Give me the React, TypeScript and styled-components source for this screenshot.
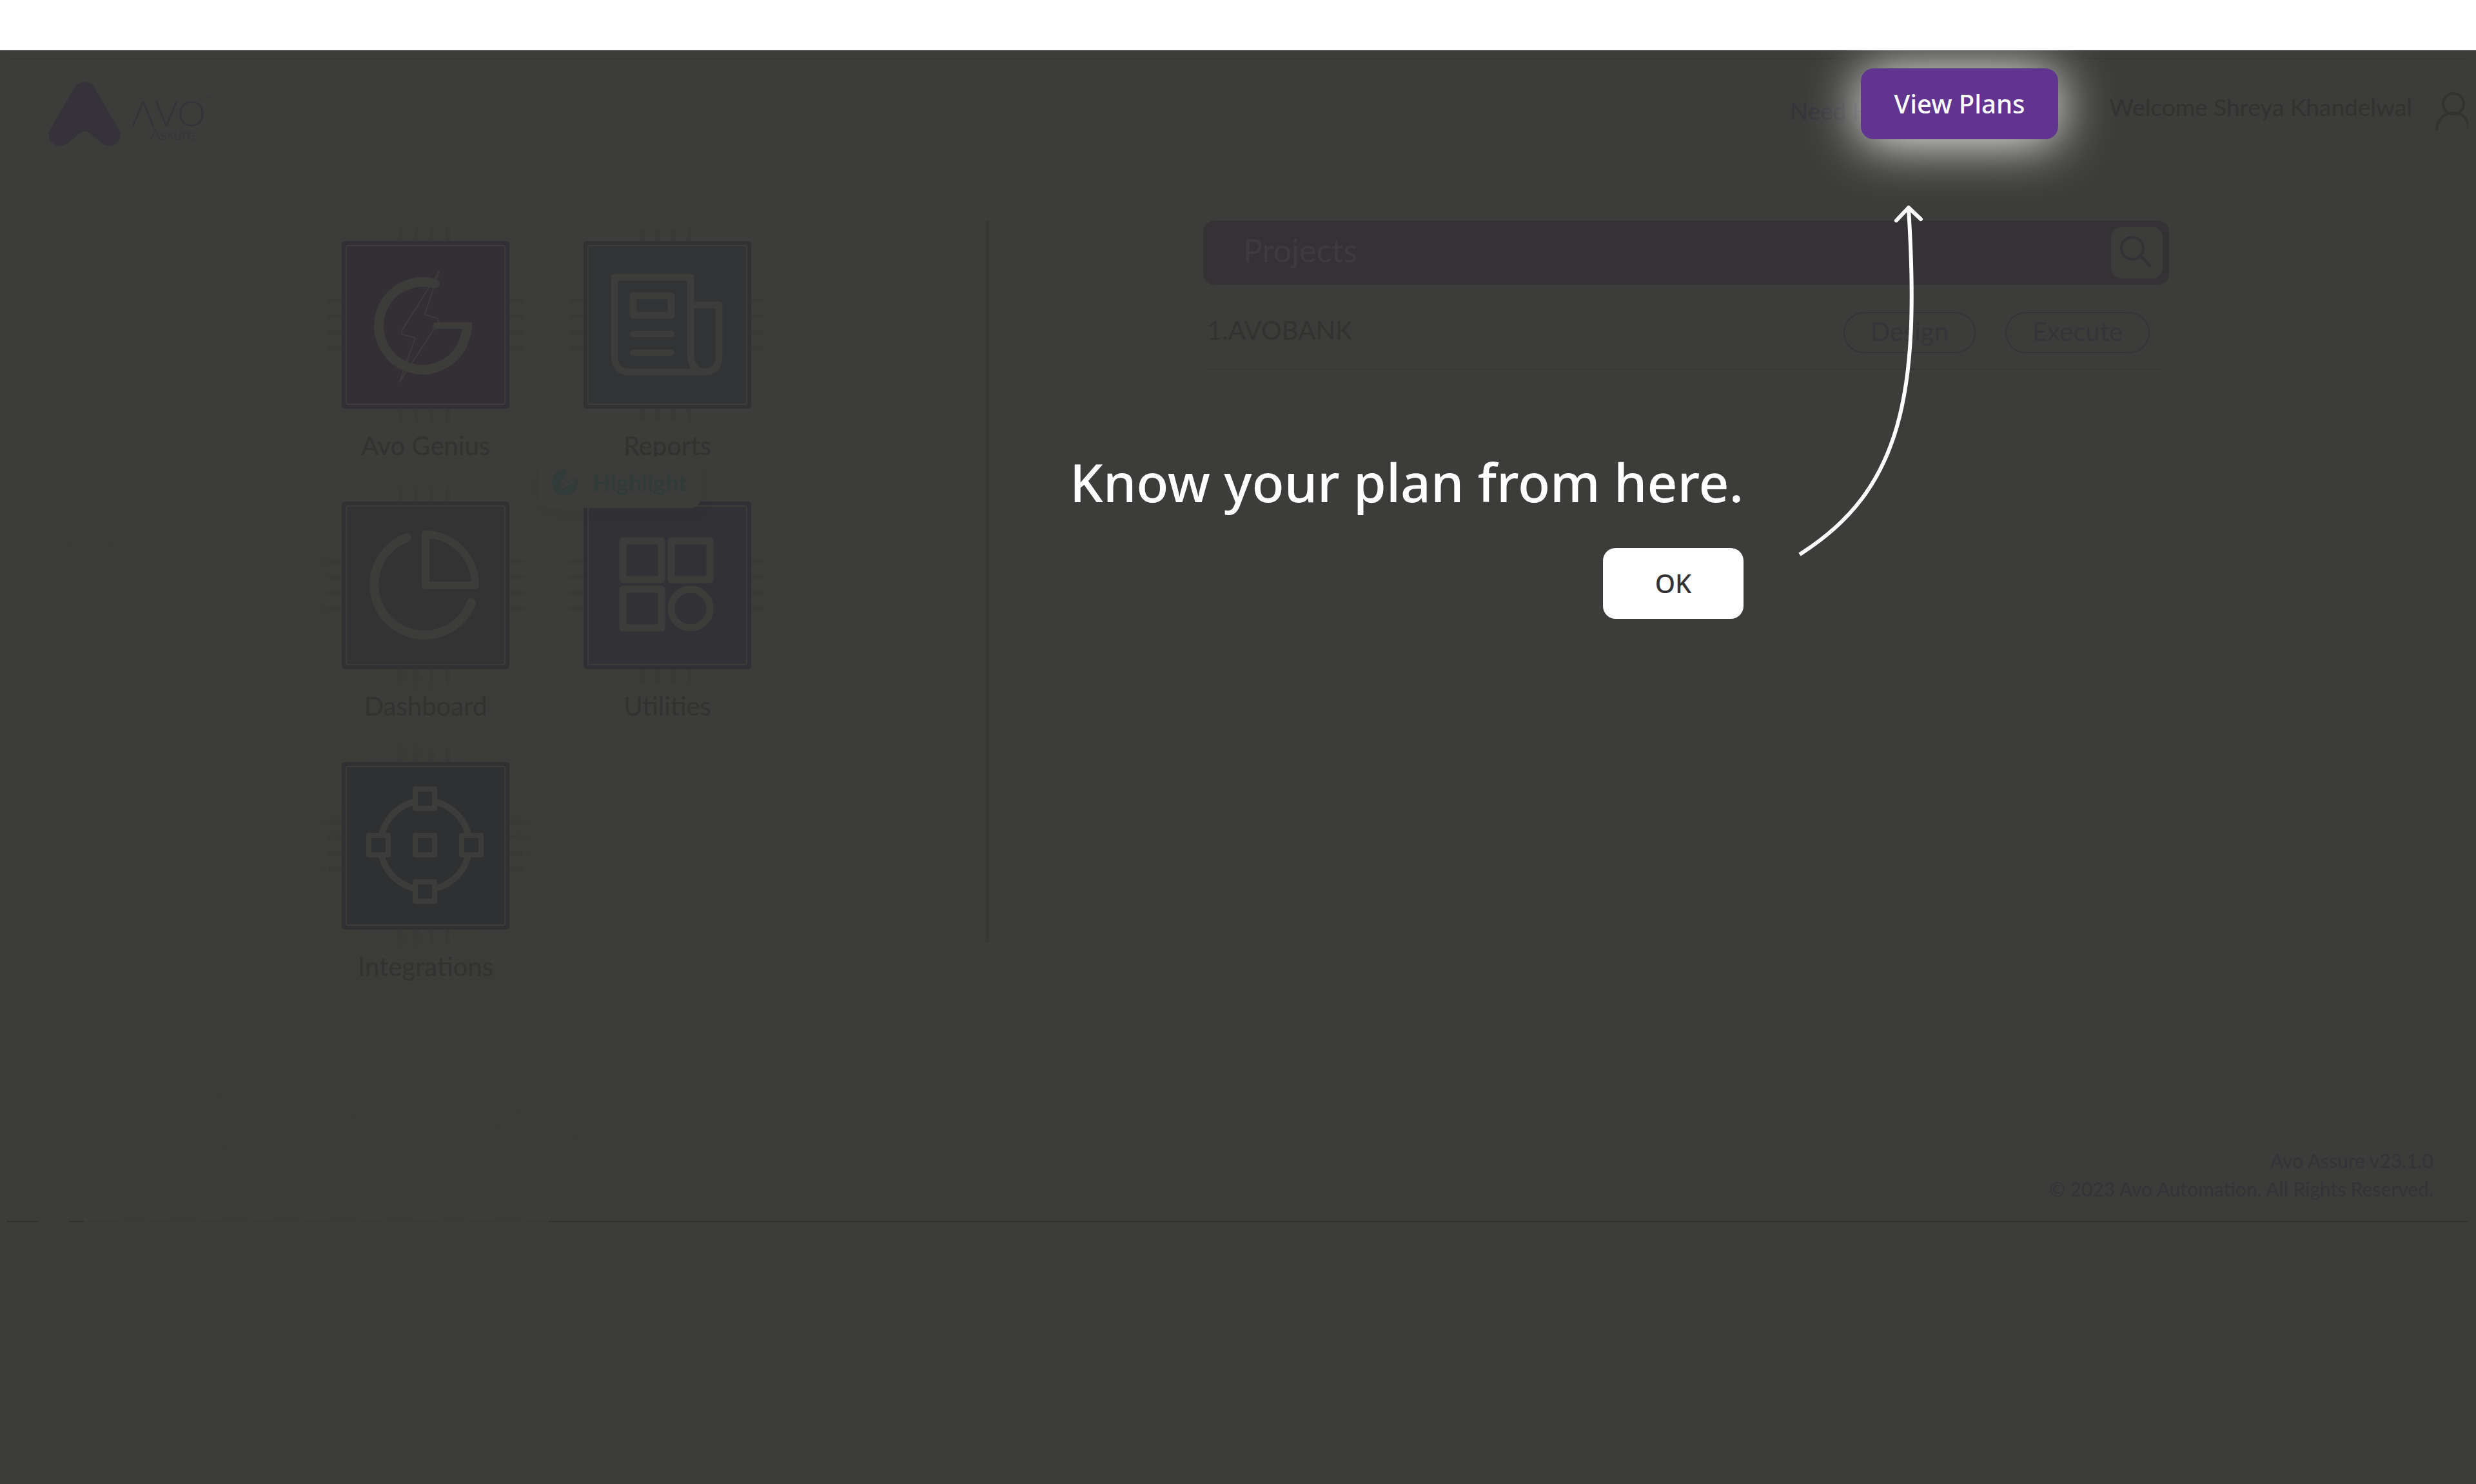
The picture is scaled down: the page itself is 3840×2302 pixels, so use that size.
import React from "react";
import styled, { createGlobalStyle } from "styled-components";

const SURFACE = "#3c3c3a";

const GlobalStyle = createGlobalStyle`
  *, *::before, *::after { box-sizing: border-box; }
  html, body { margin: 0; background: #ffffff; }
  body { font-family: Lato, "Noto Sans", sans-serif; color: #313130; }
  button, input { font: inherit; color: inherit; }
`;

const Page = styled.div`
  display: flex;
  flex-direction: column;
  min-height: 100vh;
  padding-top: 78px;
`;

const Stage = styled.div`
  position: relative;
  flex: 1;
  overflow: hidden;
  background: ${SURFACE};
  padding: 12px 12px 0 10px;
`;

const Product = styled.div`
  position: relative;
  display: flex;
  flex-direction: column;
  border-top: 2px solid #393937;
  border-bottom: 2px solid #313130;
`;

const Header = styled.header`
  position: relative;
  display: flex;
  align-items: flex-start;
  justify-content: space-between;
  height: 170px;
  padding-left: 65px;
  border-bottom: 1px solid #3b3b39;
`;

const Logo = styled.svg`
  width: 260px;
  height: 104px;
  margin-top: 34px;
  fill: #353239;
  font-family: Lato, sans-serif;
`;

const Nav = styled.nav`
  display: flex;
  align-items: flex-start;
  margin-top: 50px;
`;

const HelpLink = styled.a`
  width: 495px;
  padding-top: 6px;
  font-size: 37px;
  line-height: 48px;
  color: #34343a;
  text-decoration: none;
`;

const Welcome = styled.span`
  font-size: 37px;
  line-height: 48px;
  margin-right: 36px;
  color: #323231;
`;

const UserButton = styled.button`
  display: block;
  padding: 0;
  border: 0;
  background: none;
  svg { display: block; width: 51px; height: 60px; }
`;

const Main = styled.main`
  position: relative;
  display: grid;
  grid-template-columns: 1519fr 5px 2294fr;
  align-items: start;
  padding-top: 80px;
`;

const TileGrid = styled.div`
  display: grid;
  grid-template-columns: repeat(2, 260px);
  gap: 63px 115px;
  padding: 32px 0 0 520px;
`;

const Tile = styled.div`
  position: relative;
  z-index: ${(p: { $raised?: boolean }) => (p.$raised ? 1 : 0)};
`;

const TileButton = styled.button`
  display: flex;
  flex-direction: column;
  align-items: center;
  gap: 33px;
  width: 260px;
  padding: 0;
  border: 0;
  background: none;
  font-size: 40px;
  line-height: 48px;
  color: #323231;
`;

const Chip = styled.svg`
  display: block;
  width: 260px;
  height: 260px;
  overflow: visible;
  fill: none;
`;

const Tag = styled.div`
  position: absolute;
  top: 334px;
  left: -69px;
  display: flex;
  align-items: center;
  gap: 23px;
  width: 250px;
  height: 80px;
  padding-left: 20px;
  border-radius: 14px;
  background: ${SURFACE};
  box-shadow: 0 6px 20px rgba(50, 52, 50, 0.1);
  font-size: 36px;
  font-weight: 700;
  line-height: 48px;
  color: #303b3a;
  svg { width: 40px; height: 40px; flex: none; }
`;

const Divider = styled.div`
  height: 1120px;
  background: #373736;
`;

const Projects = styled.section`
  padding: 0 464px 0 332px;
`;

const ProjectsBar = styled.div`
  display: flex;
  align-items: center;
  justify-content: space-between;
  height: 100px;
  padding: 0 10px 0 62px;
  border-radius: 18px;
  background: #353235;
`;

const BarTitle = styled.h2`
  margin: 0;
  padding-bottom: 8px;
  font-size: 50px;
  font-weight: 400;
  line-height: 60px;
  color: #3d3b3d;
`;

const SearchButton = styled.button`
  width: 80px;
  height: 80px;
  padding: 0;
  border: 0;
  border-radius: 16px;
  background: ${SURFACE};
  svg { display: block; }
`;

const ProjectRow = styled.div`
  display: flex;
  align-items: flex-start;
  gap: 46px;
  height: 132px;
  margin: 0 8px 0 6px;
  padding: 42px 22px 0 0;
  border-bottom: 2px solid #383837;
`;

const ProjectName = styled.span`
  flex: 1;
  font-size: 40px;
  line-height: 56px;
  color: #323231;
`;

const Pill = styled.button`
  height: 64px;
  padding: 0 40px 4px;
  border: 2px solid #353438;
  border-radius: 32px;
  background: none;
  font-size: 40px;
  line-height: 52px;
  color: #353438;
`;

const Footer = styled.footer`
  margin-top: 255px;
  padding: 0 54px 28px 0;
  text-align: right;
  font-size: 30px;
  line-height: 44px;
  color: #333338;
`;

const Fingerprint = styled.svg`
  position: absolute;
  left: 0;
  bottom: -2px;
  width: 1112px;
  height: 1224px;
  fill: none;
  stroke: #3b3b38;
`;

const Tour = styled.div`
  position: absolute;
  inset: 0;
  display: flex;
  flex-direction: column;
  align-items: flex-end;
  padding: 28px 648px 0 0;
  font-family: "Noto Sans", sans-serif;
`;

const TourButton = styled.button`
  height: 110px;
  border: 0;
  border-radius: 20px;
  font-size: 40px;
  font-weight: 500;
  line-height: 52px;
`;

const PlansButton = styled(TourButton)`
  width: 306px;
  background: #60348f;
  color: #ffffff;
  box-shadow: 0 4px 84px 0 #ffffff;
`;

const OkButton = styled(TourButton)`
  width: 218px;
  background: #ffffff;
  color: #333333;
`;

const Callout = styled.div`
  display: flex;
  align-items: flex-start;
  gap: 80px;
  margin: 100px 208px 0 0;
`;

const Message = styled.div`
  display: flex;
  flex-direction: column;
  align-items: flex-end;
  gap: 48px;
  padding-top: 376px;
`;

const Headline = styled.h1`
  margin: 0;
  font-size: 82px;
  font-weight: 500;
  line-height: 110px;
  color: #ffffff;
`;

const Arrow = styled.svg`
  width: 200px;
  height: 550px;
  fill: none;
  stroke: #ffffff;
  stroke-width: 6;
`;

const PIN_X = [91, 115, 139, 164];
const PIN_Y = [93, 117, 142, 166];

function ChipTile({ label, fill, edge, children, tag }: {
  label: string; fill: string; edge: string; children: React.ReactNode; tag?: React.ReactNode;
}) {
  return (
    <Tile $raised={Boolean(tag)}>
      <TileButton type="button">
        <Chip viewBox="0 0 260 260" aria-hidden="true">
          <g stroke="#393938" strokeWidth="7">
            {PIN_X.map((x) => <path key={x} d={`M${x} -20V0M${x} 260V280`} />)}
            {PIN_Y.map((y) => <path key={y} d={`M-20 ${y}H0M260 ${y}H280`} />)}
          </g>
          <g stroke="#3b3b39" strokeWidth="5">
            {PIN_X.map((x) => <path key={x} d={`M${x} -32V-20M${x} 280V292`} />)}
            {PIN_Y.map((y) => <path key={y} d={`M-32 ${y}H-20M280 ${y}H292`} />)}
          </g>
          <rect width="260" height="260" rx="5" fill={edge} />
          <rect x="7" y="7" width="246" height="246" rx="2" fill={fill} stroke={SURFACE} strokeWidth="2" />
          <g stroke={SURFACE} strokeWidth="11" strokeLinejoin="round">{children}</g>
        </Chip>
        {label}
      </TileButton>
      {tag}
    </Tile>
  );
}

const RINGS = [
  [962, 1100], [890, 1020], [814, 938], [740, 864], [654, 790], [568, 714],
  [482, 638], [398, 556], [310, 470], [229, 386], [149, 240], [72, 84],
];

export default function App() {
  return (
    <>
      <GlobalStyle />
      <Page>
        <Stage>
          <Product>
            <Fingerprint viewBox="0 0 1112 1224" aria-hidden="true">
              {RINGS.map(([rx, ry]) => (
                <path
                  key={rx}
                  strokeWidth="41"
                  d={`M${126 - rx} 1126A${rx} ${ry} 0 0 1 ${126 + rx} 1126V1222`}
                />
              ))}
              <path strokeWidth="41" strokeLinecap="round" d="M126 1126Q110 1180 70 1222" />
              <rect x="120" y="1222" width="720" height="2" fill="#3a3a38" stroke="none" />
            </Fingerprint>
            <Header>
              <Logo viewBox="0 0 260 104" role="img" aria-label="Avo Assure">
                <path d="M39 13C46-3 66-3 73 13L110 76C117 94 98 108 83 96L63 80Q56 74 50 80L30 96C14 108-5 94 2 76Z" />
                <text x="129" y="70" fontSize="55" fontWeight="300">
                  ΛVO<tspan fontSize="12" dy="-38">™</tspan>
                </text>
                <text x="158" y="91" fontSize="24" fontWeight="300">Λssure</text>
              </Logo>
              <Nav>
                <HelpLink href="#help">Need Help?</HelpLink>
                <Welcome>Welcome Shreya Khandelwal</Welcome>
                <UserButton type="button" aria-label="Account">
                  <svg viewBox="0 0 51 60" fill="none" stroke="#323231" strokeWidth="4">
                    <circle cx="28" cy="19" r="16" />
                    <path d="M2 60C2 44 13 33 28 33S52 44 52 60" />
                  </svg>
                </UserButton>
              </Nav>
            </Header>
            <Main>
              <TileGrid>
                <ChipTile label="Avo Genius" fill="#332f34" edge="#323035">
                  <path strokeWidth="2" d="M151 47L93 139L94 145L114 150L90 218L150 126L149 120L129 114Z" />
                  <path strokeWidth="15" strokeLinecap="round" d="M144 66A68 68 0 1 0 191 150" />
                  <path strokeWidth="15" d="M191 150Q195 140 194.500 126" />
                  <path strokeWidth="10" strokeLinecap="round" d="M146 131H190" />
                </ChipTile>
                <ChipTile
                  label="Reports"
                  fill="#313334"
                  edge="#303234"
                  tag={
                    <Tag>
                      <svg viewBox="0 0 40 40" aria-hidden="true">
                        <path fill="#303b3a" d="M24 1A20 20 0 1 0 38 12L31 23L19 29L9 31L16 16Z" />
                        <path fill="none" stroke="#303b3a" strokeWidth="1.5" d="M18 14L29 22M9 31L20 22" />
                      </svg>
                      Highlight
                    </Tag>
                  }
                >
                  <path d="M190 203H72Q48 203 48 178V56H166V178Q168 203 188 203Q210 203 210 178V99H166" />
                  <rect x="77" y="85" width="59" height="30" />
                  <path strokeWidth="10" strokeLinecap="round" d="M77 144H136M77 173H136" />
                </ChipTile>
                <ChipTile label="Dashboard" fill="#333334" edge="#313134">
                  <path strokeWidth="14" strokeLinecap="round" d="M101 56A78 78 0 1 0 201 157" />
                  <path strokeWidth="12" d="M130 51V130H207A77 79 0 0 0 130 51Z" />
                </ChipTile>
                <ChipTile label="Utilities" fill="#323136" edge="#303034">
                  <rect x="61" y="61" width="60" height="60" />
                  <rect x="136" y="61" width="60" height="60" />
                  <rect x="61" y="136" width="60" height="60" />
                  <circle cx="166" cy="166" r="30" />
                </ChipTile>
                <ChipTile label="Integrations" fill="#2f3032" edge="#313134">
                  <circle cx="129" cy="129" r="69" strokeWidth="10" />
                  <g fill="#2f3032" strokeWidth="8">
                    {[[129, 57], [57, 129], [129, 129], [201, 129], [129, 201]].map(([x, y]) => (
                      <rect key={`${x}-${y}`} x={x - 15} y={y - 15} width="30" height="30" />
                    ))}
                  </g>
                </ChipTile>
              </TileGrid>
              <Divider />
              <Projects>
                <ProjectsBar>
                  <BarTitle>Projects</BarTitle>
                  <SearchButton type="button" aria-label="Search projects">
                    <svg viewBox="0 0 80 80" fill="none" stroke="#343237" strokeLinecap="round">
                      <circle cx="33" cy="33" r="17" strokeWidth="4" />
                      <path d="M46 45L60 60" strokeWidth="5" />
                    </svg>
                  </SearchButton>
                </ProjectsBar>
                <ProjectRow>
                  <ProjectName>1.AVOBANK</ProjectName>
                  <Pill type="button">Design</Pill>
                  <Pill type="button">Execute</Pill>
                </ProjectRow>
              </Projects>
            </Main>
            <Footer>
              Avo Assure v23.1.0
              <br />
              © 2023 Avo Automation. All Rights Reserved.
            </Footer>
          </Product>
          <Tour>
            <PlansButton type="button">View Plans</PlansButton>
            <Callout>
              <Message>
                <Headline>Know your plan from here.</Headline>
                <OkButton type="button">OK</OkButton>
              </Message>
              <Arrow viewBox="2784 316 200 550" aria-hidden="true">
                <path d="M2791 860C2950 760 2978 610 2960 324" />
                <path d="M2941 342L2960 322L2979 340" strokeLinecap="round" strokeLinejoin="round" />
              </Arrow>
            </Callout>
          </Tour>
        </Stage>
      </Page>
    </>
  );
}
